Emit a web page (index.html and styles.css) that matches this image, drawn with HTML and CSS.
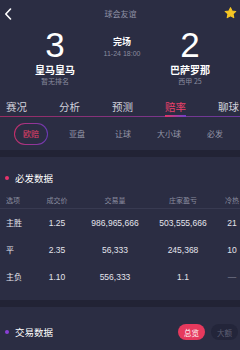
FILE: index.html
```html
<!DOCTYPE html>
<html lang="zh">
<head>
<meta charset="utf-8">
<title>球会友谊</title>
<link rel="stylesheet" href="styles.css">
</head>
<body>
<div class="page">
  <header class="topbar">
    <svg class="back" width="8" height="12" viewBox="0 0 8 12"><path d="M6.5 1 L1.8 6 L6.5 11" fill="none" stroke="#fff" stroke-width="1.6" stroke-linecap="round" stroke-linejoin="round"/></svg>
    <div class="title">球会友谊</div>
    <svg class="star" width="13" height="12" viewBox="0 0 24 23"><path d="M12 1.2 L15.1 7.6 L22.2 8.5 L17 13.4 L18.3 20.4 L12 17 L5.7 20.4 L7 13.4 L1.8 8.5 L8.9 7.6 Z" fill="#f6c624" stroke="#f6c624" stroke-width="2" stroke-linejoin="round"/></svg>
  </header>

  <section class="match">
    <div class="team">
      <div class="score">3</div>
      <div class="name">皇马皇马</div>
      <div class="rank">暂无排名</div>
    </div>
    <div class="status">
      <div class="state">完场</div>
      <div class="time">11-24 18:00</div>
    </div>
    <div class="team right">
      <div class="score">2</div>
      <div class="name">巴萨罗那</div>
      <div class="rank">西甲 25</div>
    </div>
  </section>

  <nav class="tabs">
    <span class="tab">赛况</span>
    <span class="tab">分析</span>
    <span class="tab">预测</span>
    <span class="tab active">赔率</span>
    <span class="tab">聊球</span>
  </nav>

  <div class="subtabs">
    <span class="sub active">欧赔</span>
    <span class="sub">亚盘</span>
    <span class="sub">让球</span>
    <span class="sub">大小球</span>
    <span class="sub">必发</span>
  </div>

  <div class="band"></div>

  <section class="block">
    <div class="head">
      <span class="dot pink"></span>
      <span class="htitle">必发数据</span>
    </div>
    <div class="grid thead">
      <span class="c1">选项</span>
      <span>成交价</span>
      <span>交易量</span>
      <span>庄家盈亏</span>
      <span>冷热</span>
    </div>
    <div class="rows">
      <div class="grid row">
        <span class="c1">主胜</span>
        <span>1.25</span>
        <span>986,965,666</span>
        <span>503,555,666</span>
        <span>21</span>
      </div>
      <div class="grid row">
        <span class="c1">平</span>
        <span>2.35</span>
        <span>56,333</span>
        <span>245,368</span>
        <span>10</span>
      </div>
      <div class="grid row">
        <span class="c1">主负</span>
        <span>1.10</span>
        <span>556,333</span>
        <span>1.1</span>
        <span class="dash">—</span>
      </div>
    </div>
  </section>

  <div class="band"></div>

  <section class="trade">
    <span class="dot purple"></span>
    <span class="htitle">交易数据</span>
    <div class="pills">
      <span class="pill on">总览</span>
      <span class="pill off">大额</span>
    </div>
  </section>
</div>
</body>
</html>
```

FILE: styles.css
```css
* { box-sizing: border-box; margin: 0; padding: 0; }
html, body { background: #2b2d43; }
body {
  width: 240px;
  height: 350px;
  overflow: hidden;
  font-family: "Liberation Sans", "Noto Sans CJK SC", sans-serif;
  color: #fff;
}
.page { width: 240px; overflow: hidden; }

.topbar {
  height: 27px;
  display: grid;
  grid-template-columns: 1fr auto 1fr;
  align-items: center;
  padding: 0 3px 0 4px;
}
.back { display: block; justify-self: start; }
.star { display: block; justify-self: end; margin-top: -2px; }
.title {
  font-family: "Noto Sans CJK SC", sans-serif;
  font-size: 8px;
  line-height: 10px;
  color: #8e90a3;
  margin-top: 1px;
}

.match {
  display: grid;
  grid-template-columns: 110px 24px 1fr;
}
.team {
  display: flex;
  flex-direction: column;
  align-items: center;
}
.team.right { padding-left: 6px; }
.score {
  font-size: 35px;
  line-height: 35px;
  font-weight: normal;
}
.name {
  font-family: "Noto Sans CJK SC", sans-serif;
  font-size: 10px;
  line-height: 12px;
  font-weight: bold;
  margin-top: 2px;
}
.rank {
  font-family: "Noto Sans CJK SC", sans-serif;
  font-size: 7px;
  line-height: 9px;
  color: #8a8c9f;
  margin-top: 1px;
}
.status {
  display: flex;
  flex-direction: column;
  align-items: center;
  padding-top: 9px;
  white-space: nowrap;
}
.state {
  font-family: "Noto Sans CJK SC", sans-serif;
  font-size: 9px;
  line-height: 11px;
  font-weight: bold;
}
.time {
  font-size: 7px;
  line-height: 9px;
  color: #8a8c9f;
  margin-top: 2px;
}

.tabs {
  display: flex;
  gap: 32px;
  padding: 14px 0 0 6px;
  white-space: nowrap;
  background: linear-gradient(90deg, #9a2c62, #6a3a9e) left bottom / 100% 1px no-repeat;
}
.tab {
  flex-shrink: 0;
  font-family: "Noto Sans CJK SC", sans-serif;
  font-size: 10.5px;
  line-height: 13px;
  color: #d2d2dc;
  padding-bottom: 2px;
  border-bottom: 2px solid transparent;
}
.tab.active {
  color: #e8406a;
  border-image: linear-gradient(90deg, #e83660, #6a40d0) 1;
}

.subtabs {
  height: 33px;
  display: grid;
  grid-template-columns: repeat(5, 46px);
  padding-left: 8px;
  align-items: center;
  justify-items: center;
}
.sub {
  font-family: "Noto Sans CJK SC", sans-serif;
  font-size: 8px;
  line-height: 10px;
  color: #9597a8;
  white-space: nowrap;
}
.sub.active {
  width: 34px;
  height: 22px;
  border-radius: 11px;
  border: 1px solid transparent;
  background: linear-gradient(#2b2d43, #2b2d43) padding-box,
              linear-gradient(90deg, #c8306a, #6a3ab8) border-box;
  color: #e8406a;
  display: flex;
  align-items: center;
  justify-content: center;
}

.band { height: 7px; background: #222335; }

.head {
  display: flex;
  align-items: center;
  gap: 6px;
  padding: 15px 0 7px 5px;
}
.dot { width: 4px; height: 4px; border-radius: 50%; flex-shrink: 0; }
.dot.pink { background: #e8336c; }
.dot.purple { background: #8a3ed6; }
.htitle {
  font-family: "Noto Sans CJK SC", sans-serif;
  font-size: 9.5px;
  line-height: 12px;
  color: #fff;
}

.grid {
  display: grid;
  grid-template-columns: 36px 42px 74px 62px 36px;
  align-items: center;
  justify-items: center;
  white-space: nowrap;
}
.grid .c1 { justify-self: start; padding-left: 6px; }
.thead {
  height: 18px;
  border-bottom: 1px solid #383a51;
  font-family: "Noto Sans CJK SC", sans-serif;
  font-size: 7px;
  color: #8a8c9f;
  width: 240px;
}
.rows { padding: 0 0 10px; }
.row {
  height: 27px;
  font-size: 8.5px;
  color: #e4e4ec;
}
.row .c1 {
  font-family: "Noto Sans CJK SC", sans-serif;
  font-size: 8px;
}
.row .dash { color: #8a8c9f; }

.trade {
  height: 50px;
  display: flex;
  align-items: center;
  gap: 6px;
  padding: 0 2px 0 5px;
}
.pills { margin-left: auto; display: flex; gap: 6px; }
.pill {
  width: 27px;
  height: 16px;
  border-radius: 8px;
  display: flex;
  align-items: center;
  justify-content: center;
  font-family: "Noto Sans CJK SC", sans-serif;
  font-size: 7.5px;
}
.pill.on { background: #e6395d; color: #fff; }
.pill.off { background: #23253a; color: #5c5e72; }
```
